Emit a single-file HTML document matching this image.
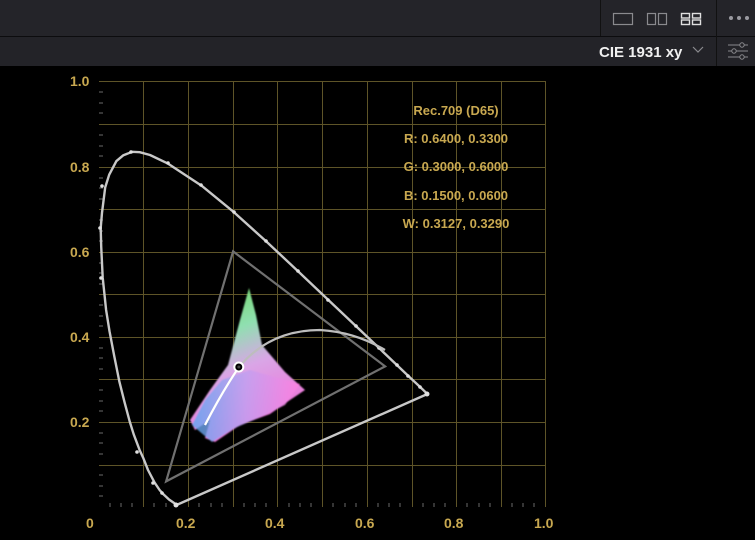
<!DOCTYPE html>
<html><head><meta charset="utf-8"><style>
html,body{margin:0;padding:0;background:#000;width:755px;height:540px;overflow:hidden;font-family:"Liberation Sans",sans-serif}
</style></head><body>
<svg width="755" height="540" viewBox="0 0 755 540" xmlns="http://www.w3.org/2000/svg" style="display:block">
<defs>
<linearGradient id="sg" x1="0" y1="0" x2="0.3" y2="1">
<stop offset="0" stop-color="#6fd45a"/><stop offset="0.35" stop-color="#8fe0b0"/><stop offset="0.6" stop-color="#d9a6e6"/><stop offset="1" stop-color="#f070d8"/>
</linearGradient>
<linearGradient id="sb" x1="0" y1="0" x2="1" y2="0">
<stop offset="0" stop-color="#5aa8f0"/><stop offset="0.5" stop-color="#c0a0f0"/><stop offset="1" stop-color="#ff80e0"/>
</linearGradient>
<filter id="bl"><feGaussianBlur stdDeviation="0.8"/></filter>
</defs>
<rect x="0" y="0" width="755" height="36" fill="#242429"/>
<rect x="0" y="36" width="755" height="1" fill="#0c0c0e"/>
<rect x="0" y="37" width="755" height="29" fill="#232328"/>
<rect x="600" y="0" width="1" height="36" fill="#111"/>
<rect x="716" y="0" width="1" height="66" fill="#111"/>
<rect x="613.5" y="13.5" width="19" height="11" fill="none" stroke="#8a8a8e" stroke-width="1.2"/>
<rect x="647.5" y="13.5" width="8" height="11" fill="none" stroke="#8a8a8e" stroke-width="1.2"/>
<rect x="658.5" y="13.5" width="8" height="11" fill="none" stroke="#8a8a8e" stroke-width="1.2"/>
<rect x="681.5" y="13.5" width="8" height="4.5" fill="none" stroke="#e0e0e0" stroke-width="1.4"/>
<rect x="692.5" y="13.5" width="8" height="4.5" fill="none" stroke="#e0e0e0" stroke-width="1.4"/>
<rect x="681.5" y="20" width="8" height="4.5" fill="none" stroke="#e0e0e0" stroke-width="1.4"/>
<rect x="692.5" y="20" width="8" height="4.5" fill="none" stroke="#e0e0e0" stroke-width="1.4"/>
<circle cx="731" cy="18" r="2" fill="#9a9aa0"/><circle cx="739" cy="18" r="2" fill="#9a9aa0"/><circle cx="747" cy="18" r="2" fill="#9a9aa0"/>
<text x="599" y="57" fill="#f0f0f0" font-size="15" font-weight="bold">CIE 1931 xy</text>
<path d="M693 47 L698 52 L703 47" fill="none" stroke="#8a8a8e" stroke-width="1.2"/>
<g stroke="#8a8a8e" stroke-width="1.1" fill="none">
<line x1="728" y1="45" x2="748" y2="45"/><line x1="728" y1="51" x2="748" y2="51"/><line x1="728" y1="57" x2="748" y2="57"/>
</g>
<circle cx="742" cy="45" r="2.2" fill="#232328" stroke="#8a8a8e"/><circle cx="734" cy="51" r="2.2" fill="#232328" stroke="#8a8a8e"/><circle cx="742" cy="57" r="2.2" fill="#232328" stroke="#8a8a8e"/>
<g stroke="#5e5428" stroke-width="1">
<line x1="143.5" y1="81" x2="143.5" y2="507"/><line x1="188.5" y1="81" x2="188.5" y2="507"/><line x1="233.5" y1="81" x2="233.5" y2="507"/><line x1="277.5" y1="81" x2="277.5" y2="507"/><line x1="322.5" y1="81" x2="322.5" y2="507"/><line x1="367.5" y1="81" x2="367.5" y2="507"/><line x1="412.5" y1="81" x2="412.5" y2="507"/><line x1="456.5" y1="81" x2="456.5" y2="507"/><line x1="501.5" y1="81" x2="501.5" y2="507"/><line x1="545.5" y1="81" x2="545.5" y2="507"/>
<line x1="99" y1="81.5" x2="546" y2="81.5"/><line x1="99" y1="124.5" x2="546" y2="124.5"/><line x1="99" y1="167.5" x2="546" y2="167.5"/><line x1="99" y1="209.5" x2="546" y2="209.5"/><line x1="99" y1="252.5" x2="546" y2="252.5"/><line x1="99" y1="294.5" x2="546" y2="294.5"/><line x1="99" y1="337.5" x2="546" y2="337.5"/><line x1="99" y1="379.5" x2="546" y2="379.5"/><line x1="99" y1="422.5" x2="546" y2="422.5"/><line x1="99" y1="465.5" x2="546" y2="465.5"/>
</g>
<!-- axis minor ticks -->
<g stroke="#6a6a6a" stroke-width="1">
<path d="M99 92h4M99 103h4M99 113h4M99 135h4M99 146h4M99 156h4M99 178h4M99 188h4M99 199h4M99 220h4M99 231h4M99 241h4M99 263h4M99 273h4M99 284h4M99 305h4M99 316h4M99 326h4M99 348h4M99 358h4M99 369h4M99 390h4M99 401h4M99 411h4M99 433h4M99 443h4M99 454h4M99 475h4M99 486h4M99 496h4"/>
<path d="M110 503v4M121 503v4M132 503v4M154 503v4M166 503v4M177 503v4M199 503v4M211 503v4M222 503v4M244 503v4M255 503v4M266 503v4M289 503v4M300 503v4M311 503v4M333 503v4M345 503v4M356 503v4M378 503v4M389 503v4M400 503v4M423 503v4M434 503v4M445 503v4M467 503v4M479 503v4M490 503v4M512 503v4M523 503v4M534 503v4"/>
</g>
<g fill="#c8a850" font-size="14" font-weight="bold">
<text x="70" y="86">1.0</text><text x="70" y="172">0.8</text><text x="70" y="257">0.6</text><text x="70" y="342">0.4</text><text x="70" y="427">0.2</text>
<text x="86" y="528">0</text><text x="176" y="528">0.2</text><text x="265" y="528">0.4</text><text x="355" y="528">0.6</text><text x="444" y="528">0.8</text><text x="534" y="528">1.0</text>
</g>
<g fill="#c8a850" font-size="13" font-weight="bold" text-anchor="middle">
<text x="456" y="115">Rec.709 (D65)</text>
<text x="456" y="143">R: 0.6400, 0.3300</text>
<text x="456" y="171">G: 0.3000, 0.6000</text>
<text x="456" y="200">B: 0.1500, 0.0600</text>
<text x="456" y="228">W: 0.3127, 0.3290</text>
</g>
<g filter="url(#bl)">
<path d="M249 288 L256 315 L262 345 L285 372 L305 390 L290 400 L270 414 L240 425 L215 442 L205 438 L210 420 L195 430 L190 420 L210 390 L228 365 L240 320 Z" fill="url(#sg)"/>
<path d="M192 425 L205 400 L222 380 L250 370 L300 384 L285 405 L265 415 L235 428 L212 442 Z" fill="url(#sb)" opacity="0.8"/>
</g>
<polygon points="385.1,366.4 233.1,251.4 166.1,481.4" fill="none" stroke="#707070" stroke-width="2.2"/>
<path d="M176.8,504.9 L169,499.5 L163.4,494.3 L159.6,490 L154.5,482.4 L148,470 L143.4,458.3 L139.8,450.5 L133.7,434.3 L129.7,421.5 L124.6,402.4 L119.3,381.3 L114.2,355.9 L109.5,331.2 L106.1,309.9 L102.7,277.6 L101.2,246.7 L100.7,228 L102,212.8 L105.2,187.4 L109.2,174.7 L116.4,161.1 L123.1,155.4 L132.2,151.8 L139.7,152.2 L150,155 L168.2,163.7 L201.6,185.7 L233.8,212.1 L265.8,241 L297.5,270.7 L328.1,299.7 L356.1,326.3 L379.3,348.3 L408.1,375.7 L420.4,387.3 L427.4,394 Z" fill="none" stroke="#c8c8c8" stroke-width="2.4" stroke-linejoin="round"/>
<g fill="#e0e0e0">
<circle cx="131" cy="152" r="1.8"/><circle cx="168" cy="163" r="1.8"/><circle cx="201" cy="185" r="1.8"/><circle cx="234" cy="212" r="1.8"/><circle cx="266" cy="241" r="1.8"/><circle cx="298" cy="271" r="1.8"/><circle cx="328" cy="300" r="1.8"/><circle cx="356" cy="326" r="1.8"/><circle cx="379" cy="348" r="1.8"/><circle cx="397" cy="365" r="1.8"/><circle cx="408" cy="376" r="1.8"/><circle cx="420" cy="387" r="1.8"/>
<circle cx="102" cy="186" r="1.8"/><circle cx="100" cy="228" r="1.8"/><circle cx="101" cy="278" r="1.8"/><circle cx="137" cy="452" r="1.8"/><circle cx="153" cy="483" r="1.8"/><circle cx="162" cy="493" r="1.8"/><circle cx="176" cy="505" r="2.5"/><circle cx="427" cy="394" r="2.5"/>
</g>
<path d="M205,425 Q222,392 239,367 Q270,330 320,330 Q355,332 385,350" fill="none" stroke="#bdbdbd" stroke-width="2.2"/>
<path d="M205,425 Q222,392 239,367" fill="none" stroke="#ffffff" stroke-width="2.2"/>
<circle cx="238.8" cy="367" r="4.5" fill="#000" stroke="#fff" stroke-width="2"/>
<circle cx="238.8" cy="367" r="1.5" fill="#444"/>
</svg>
</body></html>
